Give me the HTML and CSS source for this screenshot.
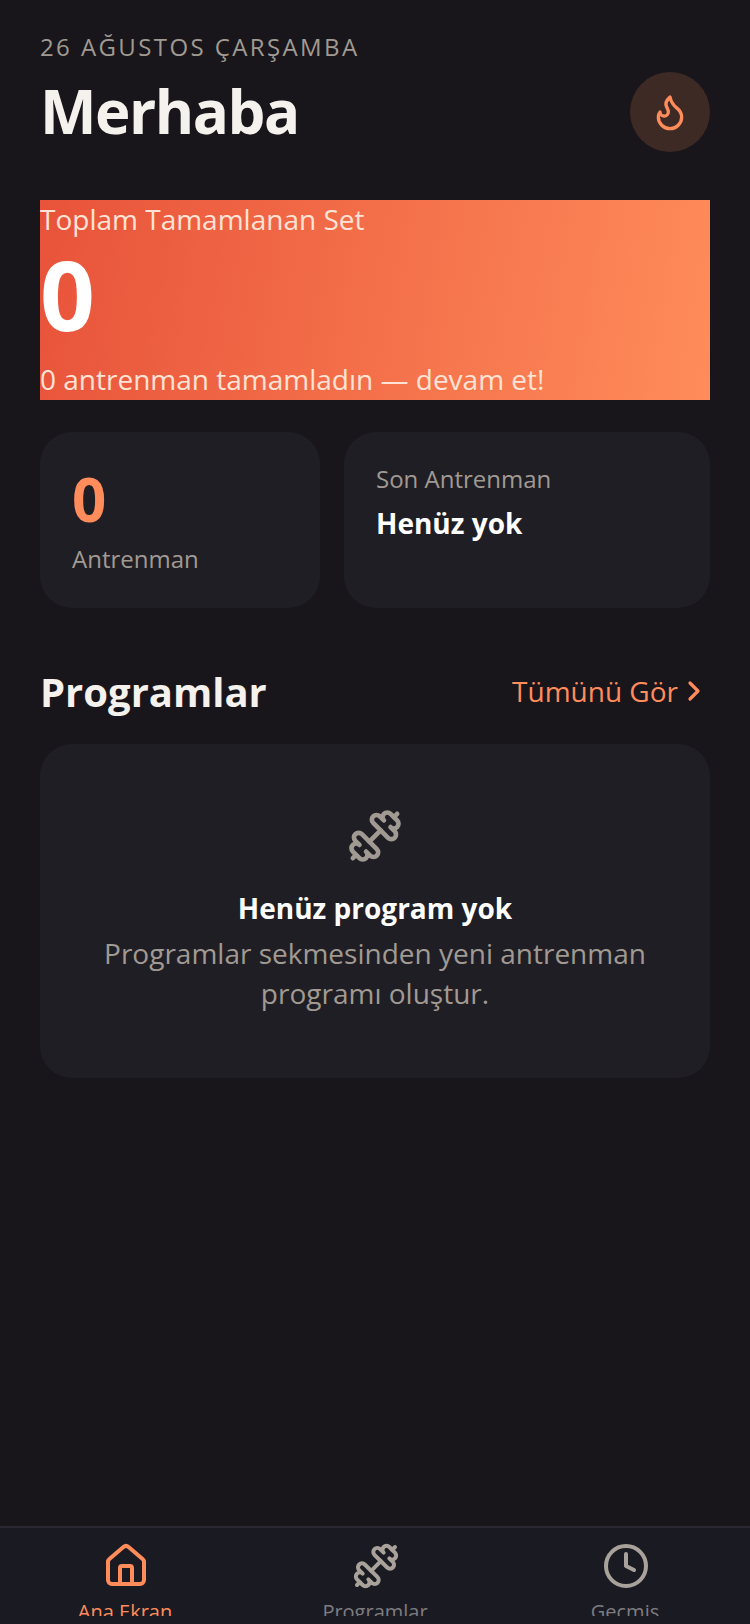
FILE: index.html
```html
<!DOCTYPE html>
<html lang="tr">
<head>
<meta charset="utf-8">
<title>Merhaba</title>
<link rel="stylesheet" href="styles.css">
</head>
<body>
<div class="app">
  <main class="main">
    <header class="header">
      <div>
        <div class="date">26 AĞUSTOS ÇARŞAMBA</div>
        <h1 class="hello">Merhaba</h1>
      </div>
      <div class="streak">
        <svg class="ic ic-flame" viewBox="0 0 24 24"><path d="M8.5 14.5A2.5 2.5 0 0 0 11 12c0-1.38-.5-2-1-3-1.072-2.143-.224-4.054 2-6 .5 2.5 2 4.9 4 6.5 2 1.6 3 3.5 3 5.5a7 7 0 1 1-14 0c0-1.153.433-2.294 1-3a2.5 2.5 0 0 0 2.5 2.5z"/></svg>
      </div>
    </header>

    <section class="hero">
      <div class="hero-label">Toplam Tamamlanan Set</div>
      <div class="hero-num">0</div>
      <div class="hero-sub">0 antrenman tamamladın — devam et!</div>
    </section>

    <section class="stats">
      <div class="card stat">
        <div class="stat-num">0</div>
        <div class="stat-label">Antrenman</div>
      </div>
      <div class="card stat">
        <div class="last-label">Son Antrenman</div>
        <div class="last-val">Henüz yok</div>
      </div>
    </section>

    <div class="sec-head">
      <h2 class="sec-title">Programlar</h2>
      <div class="sec-link">Tümünü Gör
        <svg class="ic ic-chev" viewBox="0 0 24 24"><path d="m9 18 6-6-6-6"/></svg>
      </div>
    </div>

    <section class="card empty">
      <svg class="ic ic-empty" viewBox="0 0 24 24"><path d="M17.596 12.768a2 2 0 1 0 2.829-2.829l-1.768-1.767a2 2 0 0 0 2.828-2.829l-2.828-2.828a2 2 0 0 0-2.829 2.828l-1.767-1.768a2 2 0 1 0-2.829 2.829z"/><path d="m2.5 21.5 1.4-1.4"/><path d="m20.1 3.9 1.4-1.4"/><path d="M5.343 21.485a2 2 0 1 0 2.829-2.828l1.767 1.768a2 2 0 1 0 2.829-2.829l-6.364-6.364a2 2 0 1 0-2.829 2.829l1.768 1.767a2 2 0 0 0-2.828 2.829z"/><path d="m9.6 14.4 4.8-4.8"/></svg>
      <div class="empty-title">Henüz program yok</div>
      <div class="empty-text">Programlar sekmesinden yeni antrenman programı oluştur.</div>
    </section>
  </main>

  <nav class="tabs">
    <div class="tab active">
      <svg class="ic ic-tab" viewBox="0 0 24 24"><path d="M15 21v-8a1 1 0 0 0-1-1h-4a1 1 0 0 0-1 1v8"/><path d="M3 10a2 2 0 0 1 .709-1.528l7-5.999a2 2 0 0 1 2.582 0l7 5.999A2 2 0 0 1 21 10v9a2 2 0 0 1-2 2H5a2 2 0 0 1-2-2z"/></svg>
      <span class="tab-label">Ana Ekran</span>
    </div>
    <div class="tab">
      <svg class="ic ic-tab" viewBox="0 0 24 24"><path d="M17.596 12.768a2 2 0 1 0 2.829-2.829l-1.768-1.767a2 2 0 0 0 2.828-2.829l-2.828-2.828a2 2 0 0 0-2.829 2.828l-1.767-1.768a2 2 0 1 0-2.829 2.829z"/><path d="m2.5 21.5 1.4-1.4"/><path d="m20.1 3.9 1.4-1.4"/><path d="M5.343 21.485a2 2 0 1 0 2.829-2.828l1.767 1.768a2 2 0 1 0 2.829-2.829l-6.364-6.364a2 2 0 1 0-2.829 2.829l1.768 1.767a2 2 0 0 0-2.828 2.829z"/><path d="m9.6 14.4 4.8-4.8"/></svg>
      <span class="tab-label">Programlar</span>
    </div>
    <div class="tab">
      <svg class="ic ic-tab" viewBox="0 0 24 24"><circle cx="12" cy="12" r="10"/><path d="M12 6v6l4 2"/></svg>
      <span class="tab-label">Geçmiş</span>
    </div>
  </nav>
</div>
</body>
</html>
```
FILE: styles.css
```css
* { box-sizing: border-box; }
html, body { margin: 0; padding: 0; height: 100%; }
body { background: #18161b; font-family: "Open Sans", sans-serif; color: #f5f1ec; overflow: hidden; }
.app { height: 1624px; display: flex; flex-direction: column; }
.main { flex: 1; padding: 31px 40px 0; }
.ic { fill: none; stroke: currentColor; stroke-width: 2; stroke-linecap: round; stroke-linejoin: round; display: block; }

.header { display: flex; justify-content: space-between; align-items: flex-end; }
.date { font-size: 24px; line-height: 32px; letter-spacing: 2.4px; color: #a09a92; }
.hello { margin: 7px 0 0; font-size: 60px; line-height: 82px; font-weight: 700; letter-spacing: -1.5px; color: #f5f1ec; }
.streak { width: 80px; height: 80px; border-radius: 50%; background: #3e2a25; color: #ff8c5a; display: flex; align-items: center; justify-content: center; flex: none; }
.ic-flame { width: 40px; height: 40px; }

.hero { margin-top: 48px; height: 200px; background: linear-gradient(100deg, #e8533a, #ff8c5a); display: flex; flex-direction: column; }
.hero-label { font-size: 28px; line-height: 38px; color: #ffe3d6; }
.hero-num { font-size: 96px; line-height: 120px; font-weight: 700; color: #fff; margin-top: -4px; }
.hero-sub { font-size: 28px; line-height: 40px; color: #ffe3d6; margin-top: 5px; }

.stats { margin-top: 32px; display: grid; grid-template-columns: 280px 366px; gap: 24px; }
.card { background: #201e25; border-radius: 32px; }
.stat { height: 176px; padding: 32px; }
.stat-num { font-size: 60px; line-height: 70px; font-weight: 700; color: #ff8c5a; }
.stat-label { font-size: 24px; line-height: 34px; color: #a09a92; margin-top: 8px; }
.last-label { font-size: 24px; line-height: 30px; color: #a09a92; }
.last-val { font-size: 28px; line-height: 38px; font-weight: 700; color: #fff; margin-top: 10px; }

.sec-head { margin-top: 53px; display: flex; justify-content: space-between; align-items: center; height: 62px; }
.sec-title { margin: 0; font-size: 40px; line-height: 54px; font-weight: 700; color: #f5f1ec; }
.sec-link { display: flex; align-items: center; font-size: 28px; line-height: 36px; color: #ff8c5a; margin-top: -2px; }
.ic-chev { width: 32px; height: 32px; stroke-width: 2.4; }

.empty { margin-top: 21px; height: 334px; padding: 64px 40px 0; display: flex; flex-direction: column; align-items: center; text-align: center; }
.ic-empty { width: 56px; height: 56px; color: #a09a92; }
.empty-title { margin-top: 24px; font-size: 28px; line-height: 40px; font-weight: 700; color: #fff; }
.empty-text { margin-top: 5px; font-size: 28px; line-height: 40px; color: #a09a92; }

.tabs { height: 98px; background: #1a1a22; border-top: 2px solid #2a2833; display: grid; grid-template-columns: repeat(3, 1fr); padding-top: 14px; overflow: hidden; }
.tab { display: flex; flex-direction: column; align-items: center; height: 74px; overflow: hidden; color: #a8a29a; }
.tab.active { color: #ff8c5a; }
.ic-tab { width: 48px; height: 48px; flex: none; margin-left: 2px; }
.tab-label { font-size: 20px; line-height: 28px; margin-top: 8px; color: #7f7c80; }
.tab.active .tab-label { color: #ff8c5a; }
```
